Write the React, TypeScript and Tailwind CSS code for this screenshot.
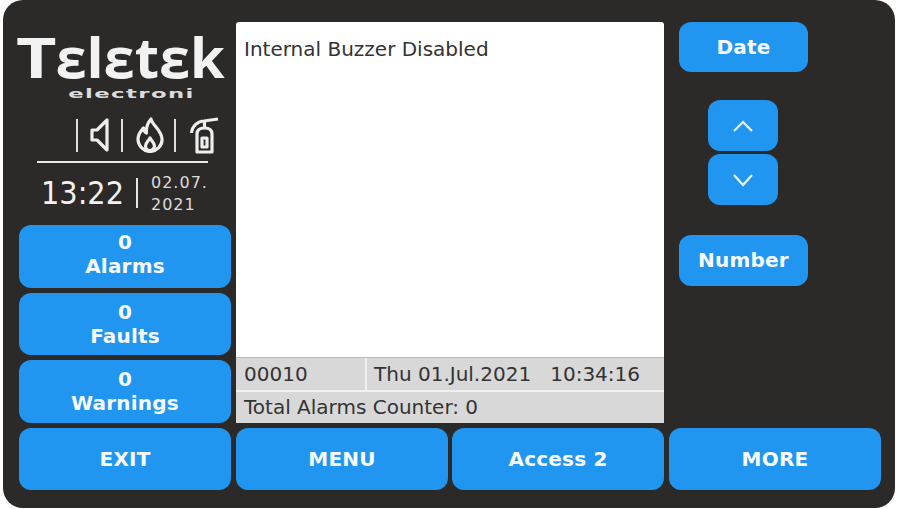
const font = { fontFamily: '"DejaVu Sans", sans-serif' };

const btn =
  'flex items-center justify-center bg-[#2196f0] text-[#f8fbff] font-bold rounded-[12px] text-[20px] leading-[24px] tracking-[0.2px]';

const Sep = ({ className }: { className: string }) => <div className={`w-[2px] h-[33px] bg-[#dedede] ${className}`} />;

const SpeakerIcon = () => (
  <svg className="ml-[11px]" width="21" height="36" viewBox="0 0 21 36" fill="none" stroke="#eee" strokeWidth="3.2" strokeLinejoin="round">
    <path d="M18 3 V33 L8 23 H3 V13 H8 Z" />
  </svg>
);

const FlameIcon = () => (
  <svg className="ml-[13px]" width="28" height="36" viewBox="0 0 28 36" fill="none" stroke="#eee" strokeWidth="3.2" strokeLinejoin="round">
    <path d="M15 2 C16 8 25.5 13 26 22 C26.5 29 20 34.5 14 34.5 C8 34.5 2 29 2 22 C2 17 5 14 7.5 11 C8 14 9 15.5 10.5 16 C10 11 11.5 6 15 2 Z" />
    <path d="M14 21 C15.5 24 18.5 26 18.5 29 C18.5 31.5 16 33.5 14 33.5 C11.5 33.5 9.5 31.5 9.5 29 C9.5 26 12.5 24 14 21 Z" />
  </svg>
);

const ExtinguisherIcon = () => (
  <svg className="ml-[13px]" width="30" height="38" viewBox="0 0 30 38" fill="none" stroke="#eee" strokeWidth="3.2" strokeLinejoin="round">
    <path d="M2.5 17 C3 10 9 5 15 5 L29 3" />
    <path d="M15.5 5 V12" />
    <path d="M8 36 V18 C8 14 11 12 15.5 12 C20 12 23 14 23 18 V36 Z" />
    <path d="M13 22 H18 V31 H13 Z" />
  </svg>
);

const ChevronUp = () => (
  <svg width="22" height="14" viewBox="0 0 22 14" fill="none" stroke="#eaf5ff" strokeWidth="2.2">
    <path d="M2 12 L11 3 L20 12" />
  </svg>
);

const ChevronDown = () => (
  <svg width="22" height="14" viewBox="0 0 22 14" fill="none" stroke="#eaf5ff" strokeWidth="2.2">
    <path d="M2 2 L11 12 L20 2" />
  </svg>
);

const CountButton = ({ label, className }: { label: string; className: string }) => (
  <div className={`${btn} flex-col ${className}`}>
    <span>0</span>
    <span>{label}</span>
  </div>
);

export default function App() {
  return (
    <div className="w-[899px] h-[509px] bg-white pl-[3px] pr-[4px] pb-[1px]" style={font}>
      <div className="w-full h-full bg-[#2b2a29] rounded-[20px] pl-[16px] pt-[22px] flex flex-col">
        <div className="flex h-[401px]">
          {/* left column */}
          <div className="w-[212px] flex flex-col">
            <div className="h-[203px] flex flex-col text-[#f2f2f2]">
              <div className="h-[46px] mt-[11px] -ml-[3px] text-[56px] leading-[46px] font-bold whitespace-nowrap" style={{ fontFamily: '"Open Sans", sans-serif' }}>
                <span className="inline-block scale-x-[1.25] origin-left mr-[7px]">T</span>εlεtεk
              </div>
              <div className="h-[16px] mt-[7px] ml-[13px] text-[13px] leading-[16px] text-center font-semibold tracking-[0.8px] scale-x-[1.75] text-[#dcdcdc]">electroni</div>
              <div className="flex items-center h-[38px] mt-[14px] ml-[57px]">
                <Sep className="" />
                <SpeakerIcon />
                <Sep className="ml-[11px]" />
                <FlameIcon />
                <Sep className="ml-[10px]" />
                <ExtinguisherIcon />
              </div>
              <div className="h-[2px] w-[171px] ml-[18px] mt-[7px] bg-[#e8e8e8]" />
              <div className="flex items-center ml-[22px] mt-[7px]">
                <span className="text-[32px] leading-[36px] w-[95px] font-stretch-condensed">13:22</span>
                <div className="w-[2px] h-[30px] bg-[#e8e8e8]" />
                <div className="ml-[13px] mt-[2px] text-[16px] leading-[22px] tracking-[1px] text-[#dddddd]">
                  <div>02.07.</div>
                  <div>2021</div>
                </div>
              </div>
            </div>
            <div className="flex flex-col gap-[5px]">
              <CountButton label="Alarms" className="h-[63px] pb-[6px]" />
              <CountButton label="Faults" className="h-[62px] pb-[1px]" />
              <CountButton label="Warnings" className="h-[63px] pb-[2px]" />
            </div>
          </div>

          {/* message panel */}
          <div className="w-[428px] ml-[5px] flex flex-col text-[#333] text-[20px]">
            <div className="h-[335px] bg-white rounded-t-[3px] pl-[8px] pt-[12px] leading-[30px]">
              Internal Buzzer Disabled
            </div>
            <div className="h-[33px] flex bg-[#d8d8d8] border-t border-[#bbb]">
              <div className="w-[131px] pl-[8px] leading-[32px] border-r-2 border-[#f0f0f0]">00010</div>
              <div className="pl-[7px] leading-[32px] whitespace-pre">Thu 01.Jul.2021   10:34:16</div>
            </div>
            <div className="h-[33px] bg-[#d8d8d8] border-t-2 border-[#f0f0f0] pl-[8px] leading-[31px]">
              Total Alarms Counter: 0
            </div>
          </div>

          {/* right column */}
          <div className="ml-[15px] w-[129px] flex flex-col items-center">
            <div className={`${btn} w-[129px] h-[50px]`}>Date</div>
            <div className={`${btn} w-[70px] h-[51px] mt-[28px] -ml-[1px]`}>
              <ChevronUp />
            </div>
            <div className={`${btn} w-[70px] h-[51px] mt-[3px] -ml-[1px]`}>
              <ChevronDown />
            </div>
            <div className={`${btn} w-[129px] h-[51px] mt-[30px] pb-[1px]`}>Number</div>
          </div>
        </div>

        {/* bottom row */}
        <div className="flex gap-[5px] mt-[5px]">
          <div className={`${btn} w-[212px] h-[62px]`}>EXIT</div>
          <div className={`${btn} w-[212px] h-[62px]`}>MENU</div>
          <div className={`${btn} w-[212px] h-[62px] -ml-[1px]`}>Access 2</div>
          <div className={`${btn} w-[212px] h-[62px]`}>MORE</div>
        </div>
      </div>
    </div>
  );
}
